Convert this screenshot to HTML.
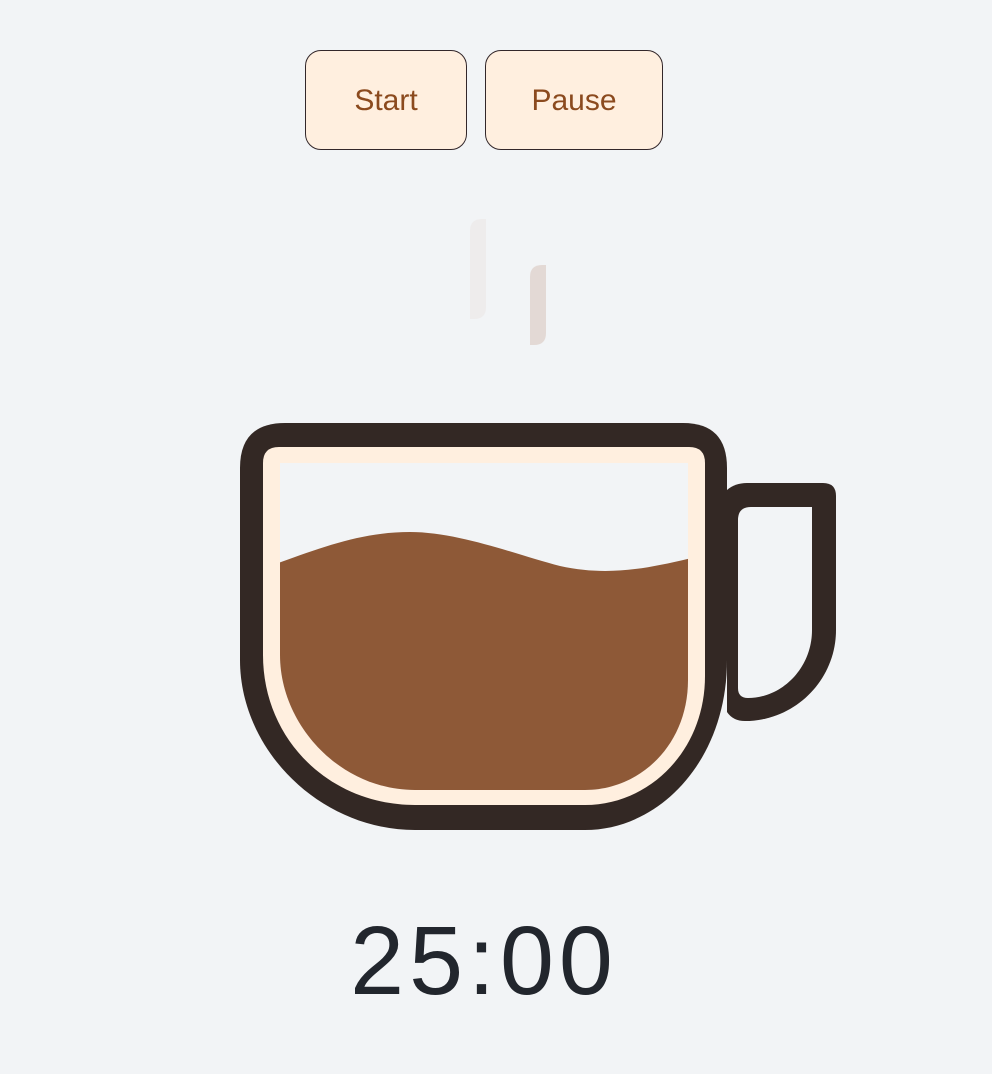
<!DOCTYPE html>
<html><head><meta charset="utf-8"><style>
html,body{margin:0;padding:0;background:#f2f4f6;width:992px;height:1074px;overflow:hidden;font-family:"Liberation Sans",sans-serif}
.btn{position:absolute;top:50px;height:100px;border:1.5px solid #33272a;border-radius:16px;background:#ffefdf;color:#8b4a1e;font-size:30px;display:flex;align-items:center;justify-content:center;box-sizing:border-box;padding-top:2px}
.t{position:absolute;left:0;width:968px;text-align:center;top:906px;font-size:97px;line-height:110px;color:#22262d;letter-spacing:5px}
</style></head><body>
<div class="btn" style="left:305px;width:162px">Start</div>
<div class="btn" style="left:485px;width:178px">Pause</div>
<svg width="992" height="1074" style="position:absolute;left:0;top:0">
<defs><clipPath id="c"><path d="M280,463 L688,463 L688,680 C688,745 640,790 585,790 L415,790 C340,790 280,725 280,655 Z"/></clipPath></defs>
<path d="M470,231 Q470,219 482,219 L486,219 L486,307 Q486,319 474,319 L470,319 Z" fill="#eeecec"/>
<path d="M530,277 Q530,265 542,265 L546,265 L546,333 Q546,345 534,345 L530,345 Z" fill="#e3d9d5"/>
<path d="M727,490 Q735,483 747,483 L823,483 Q836,483 836,496 L836,630 C836,680 795,721 745,721 Q733,721 727,712 Z" fill="#332824"/>
<path d="M738,520 Q738,507 751,507 L812,507 L812,630 C812,668 782,698 748,698 Q738,698 738,688 Z" fill="#f2f4f6"/>
<path d="M240,468 Q240,423 285,423 L683,423 Q727,423 727,468 L727,660 C727,760 660,830 585,830 L415,830 C320,830 240,750 240,660 Z" fill="#332824"/>
<path d="M263,463 Q263,447 279,447 L689,447 Q705,447 705,463 L705,676 C705,750 650,805 585,805 L415,805 C330,805 263,740 263,655 Z" fill="#ffefdf"/>
<path d="M280,463 L688,463 L688,680 C688,745 640,790 585,790 L415,790 C340,790 280,725 280,655 Z" fill="#f2f4f6"/>
<g clip-path="url(#c)"><path d="M270,566 C320,548 360,532 410,532 C460,532 520,556 560,566 C610,577 650,568 700,556 L700,800 L270,800 Z" fill="#8e5937"/></g>
</svg>
<div class="t">25:00</div>
</body></html>
